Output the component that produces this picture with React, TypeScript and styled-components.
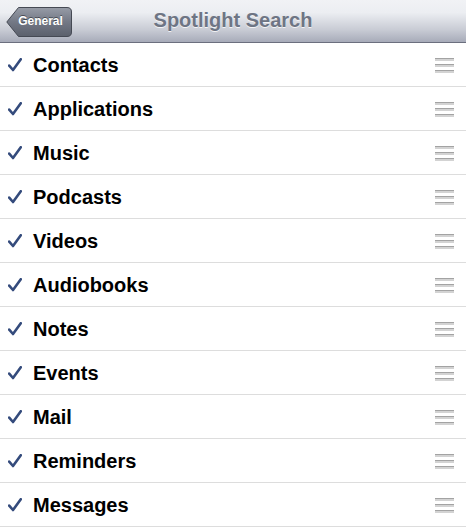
import React from "react";
import styled, { createGlobalStyle } from "styled-components";

const Global = createGlobalStyle`
  html, body { margin: 0; padding: 0; background: #ffffff; }
  body { font-family: "Liberation Sans", Arial, Helvetica, sans-serif; }
`;

const Page = styled.div`
  width: 466px;
  background: #ffffff;
`;

const NavBar = styled.header`
  height: 42px;
  border-bottom: 1px solid #6b6f7e;
  background: linear-gradient(
    to bottom,
    #f1f2f5 0%,
    #eceef2 30%,
    #c9ccd5 70%,
    #a7abb9 100%
  );
  display: grid;
  grid-template-columns: 1fr auto 1fr;
  align-items: center;
`;

const Title = styled.h1`
  margin: 0;
  font-size: 20px;
  font-weight: bold;
  color: #6e7584;
  text-shadow: 0 1px 0 rgba(255, 255, 255, 0.75);
  white-space: nowrap;
  padding-bottom: 1px;
`;

const BackButton = styled.button`
  position: relative;
  justify-self: start;
  margin-left: 6px;
  margin-top: 1px;
  width: 66px;
  height: 30px;
  padding: 0 9px 1px 12px;
  border: none;
  background: transparent;
  font-family: "Liberation Sans", Arial, sans-serif;
  font-size: 12px;
  font-weight: bold;
  color: #ffffff;
  text-shadow: 0 -1px 0 rgba(0, 0, 0, 0.45);
  display: flex;
  align-items: center;
  justify-content: center;
  cursor: pointer;
`;

const ButtonShape = styled.svg`
  position: absolute;
  inset: 0;
  width: 66px;
  height: 30px;
`;

const ButtonLabel = styled.span`
  position: relative;
`;

const List = styled.ul`
  list-style: none;
  margin: 0;
  padding: 0;
`;

const Row = styled.li`
  height: 43px;
  border-bottom: 1px solid #dddddd;
  display: flex;
  align-items: center;
`;

const Check = styled.svg`
  width: 14px;
  height: 14px;
  margin-left: 8px;
  margin-right: 11px;
  margin-top: 1px;
  flex: none;
`;

const Label = styled.span`
  flex: 1;
  font-size: 20px;
  font-weight: bold;
  color: #000000;
  padding-top: 1px;
`;

const Grabber = styled.div`
  width: 19px;
  margin-right: 12px;
  display: flex;
  flex-direction: column;
  gap: 3px;
  padding-top: 1px;
`;

const GrabBar = styled.div`
  height: 2px;
  border-top: 1px solid #a3a3a3;
  background: #d3d3d3;
`;

const items = [
  "Contacts",
  "Applications",
  "Music",
  "Podcasts",
  "Videos",
  "Audiobooks",
  "Notes",
  "Events",
  "Mail",
  "Reminders",
  "Messages",
];

const CheckIcon = () => (
  <Check viewBox="0 0 14 14">
    <path
      d="M1.2 7.6 L5 12 L12.8 1.2"
      fill="none"
      stroke="#344b7c"
      strokeWidth="2.6"
      strokeLinecap="round"
      strokeLinejoin="round"
    />
  </Check>
);

export default function App() {
  return (
    <Page>
      <Global />
      <NavBar>
        <BackButton>
          <ButtonShape viewBox="0 0 66 30">
            <defs>
              <linearGradient id="bb" x1="0" y1="0" x2="0" y2="1">
                <stop offset="0" stopColor="#979ca7" />
                <stop offset="0.5" stopColor="#737885" />
                <stop offset="1" stopColor="#5b606c" />
              </linearGradient>
            </defs>
            <path
              d="M0.8 15 L12.5 0.5 H61 Q65.5 0.5 65.5 5 V25 Q65.5 29.5 61 29.5 H12.5 Z"
              fill="url(#bb)"
              stroke="#454953"
              strokeWidth="1"
              strokeLinejoin="round"
            />
          </ButtonShape>
          <ButtonLabel>General</ButtonLabel>
        </BackButton>
        <Title>Spotlight Search</Title>
        <div />
      </NavBar>
      <List>
        {items.map((name) => (
          <Row key={name}>
            <CheckIcon />
            <Label>{name}</Label>
            <Grabber>
              <GrabBar />
              <GrabBar />
              <GrabBar />
            </Grabber>
          </Row>
        ))}
      </List>
    </Page>
  );
}
